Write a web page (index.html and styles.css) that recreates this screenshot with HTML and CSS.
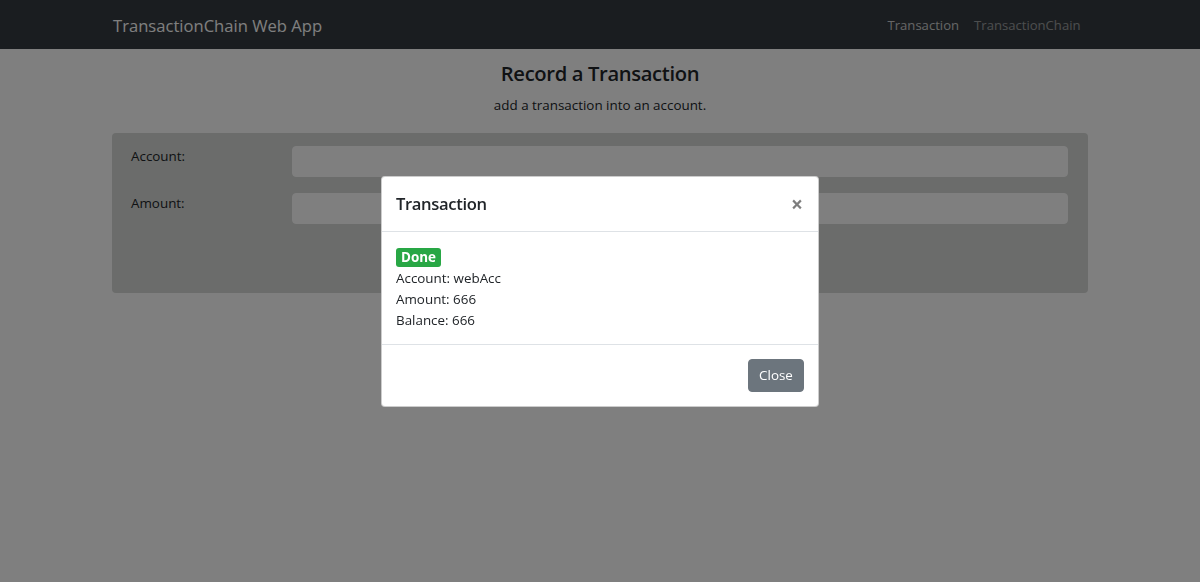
FILE: index.html
```html
<!DOCTYPE html>
<html lang="en">
<head>
<meta charset="utf-8">
<title>TransactionChain Web App</title>
<link rel="stylesheet" href="styles.css">
</head>
<body>
<nav class="navbar">
  <div class="container nav-inner">
    <a class="brand" href="#">TransactionChain Web App</a>
    <ul class="nav">
      <li><a class="nav-link active" href="#">Transaction</a></li>
      <li><a class="nav-link" href="#">TransactionChain</a></li>
    </ul>
  </div>
</nav>
<main class="container">
  <h3 class="page-title">Record a Transaction</h3>
  <p class="page-sub">add a transaction into an account.</p>
  <form class="tx-card">
    <div class="form-row">
      <label class="form-label">Account:</label>
      <input class="form-control" type="text">
    </div>
    <div class="form-row">
      <label class="form-label">Amount:</label>
      <input class="form-control" type="text">
    </div>
    <div class="form-actions"></div>
  </form>
</main>
<div class="backdrop"></div>
<div class="modal">
  <div class="modal-content">
    <div class="modal-header">
      <h5 class="modal-title">Transaction</h5>
      <button class="close" type="button">&times;</button>
    </div>
    <div class="modal-body">
      <span class="badge">Done</span>
      <div>Account: webAcc</div>
      <div>Amount: 666</div>
      <div>Balance: 666</div>
    </div>
    <div class="modal-footer">
      <button class="btn-secondary" type="button">Close</button>
    </div>
  </div>
</div>
</body>
</html>
```
FILE: styles.css
```css
* { box-sizing: border-box; }
html, body { margin: 0; padding: 0; }
body {
  font-family: "Open Sans", "Noto Sans", sans-serif;
  font-size: 13.4px;
  line-height: 21px;
  color: #212529;
  background: #fff;
  height: 582px;
  overflow: hidden;
}
.container {
  width: 976px;
  margin: 0 auto;
}
.navbar {
  background: #343a40;
  height: 49px;
}
.nav-inner {
  display: flex;
  align-items: center;
  justify-content: space-between;
  height: 100%;
  padding-top: 1px;
}
.brand {
  color: #fff;
  font-size: 16.6px;
  text-decoration: none;
  margin-left: 1px;
}
.nav {
  list-style: none;
  display: flex;
  margin: 0;
  padding: 0;
}
.nav-link {
  display: block;
  padding: 0 7.5px;
  color: rgba(255,255,255,.5);
  text-decoration: none;
  font-size: 13.1px;
}
.nav-link.active { color: rgba(255,255,255,.75); }
.page-title {
  text-align: center;
  font-size: 20.2px;
  font-weight: 600;
  letter-spacing: -0.35px;
  margin: 12px 0 0;
  line-height: 1.2;
}
.page-sub {
  text-align: center;
  margin: 10px 0 0;
}
.tx-card {
  margin-top: 17px;
  background: #d6d9d6;
  border-radius: 4px;
  padding: 13px 20px 0 19px;
  height: 160px;
}
.form-row {
  display: grid;
  grid-template-columns: 161px 1fr;
  margin-bottom: 16px;
}
.form-label { padding-top: 0; }
.form-control {
  height: 31px;
  border: 1px solid #fff;
  border-radius: 4px;
  background: #fff;
  font: inherit;
}
.backdrop {
  position: fixed;
  inset: 0;
  background: rgba(0,0,0,.5);
}
.modal {
  position: fixed;
  inset: 0;
  display: flex;
  align-items: center;
  justify-content: center;
  padding-top: 1px;
}
.modal-content {
  width: 438px;
  background: #fff;
  border: 1px solid rgba(0,0,0,.2);
  border-radius: 4px;
}
.modal-header {
  display: flex;
  align-items: center;
  justify-content: space-between;
  padding: 14px;
  height: 55px;
  border-bottom: 1px solid #dee2e6;
}
.modal-title {
  margin: 0;
  font-size: 16.6px;
  font-weight: 600;
  letter-spacing: -0.35px;
  line-height: 26px;
}
.close {
  border: 0;
  background: none;
  padding: 0;
  font-size: 21px;
  font-weight: 700;
  line-height: 1;
  color: #000;
  opacity: .5;
  font-family: inherit;
  margin-right: 1px;
  margin-top: 1px;
}
.modal-body {
  padding: 15px 14px 13px;
}
.badge {
  display: inline-block;
  background: #28a745;
  color: #fff;
  font-weight: 700;
  font-size: 13.4px;
  line-height: 1;
  padding: 3px 5px 3px;
  border-radius: 3px;
  margin-bottom: 1px;
}
.modal-footer {
  display: flex;
  justify-content: flex-end;
  padding: 14px;
  border-top: 1px solid #dee2e6;
}
.btn-secondary {
  background: #6c757d;
  border: 1px solid #6c757d;
  color: #fff;
  font: inherit;
  padding: 5px 10px;
  border-radius: 4px;
  height: 33px;
  width: 56px;
}
```
